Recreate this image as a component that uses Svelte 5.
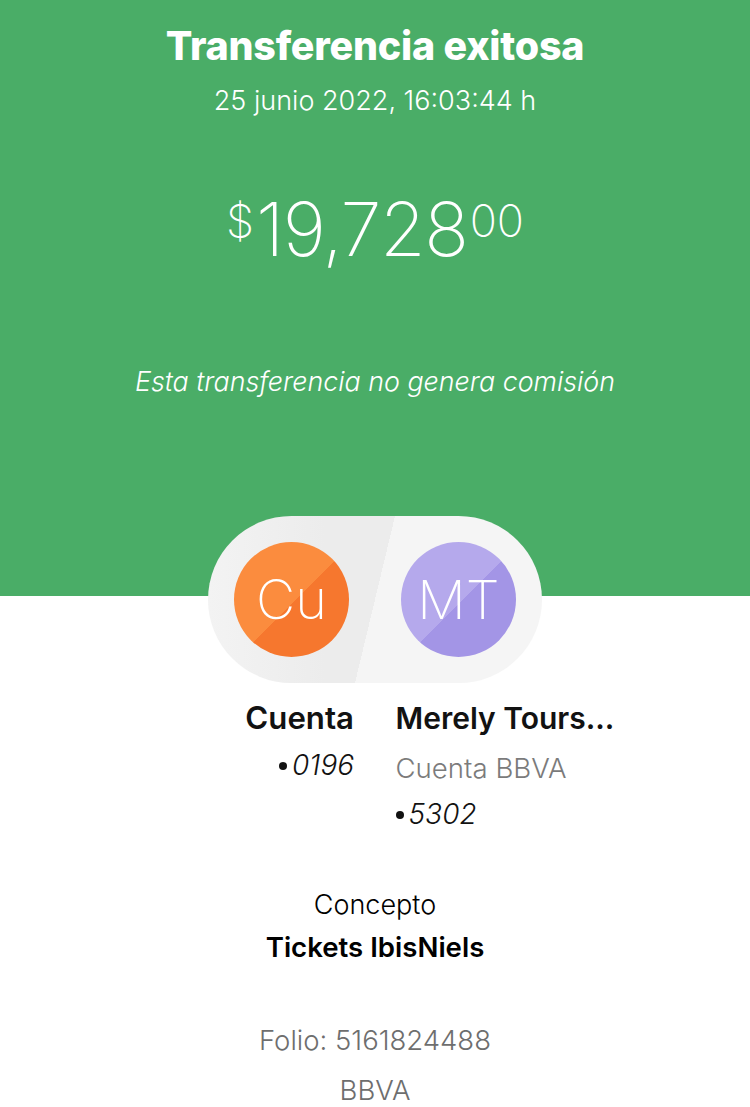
<script>
  const parties = [
    { initials: 'Cu', tone: 'orange' },
    { initials: 'MT', tone: 'purple' }
  ];
</script>

<main class="page">
  <header class="hero">
    <h1>Transferencia exitosa</h1>
    <p class="date">25 junio 2022, 16:03:44 h</p>
    <p class="amount"><span class="sup cur">$</span>19,728<span class="sup cents">00</span></p>
    <p class="note">Esta transferencia no genera comisión</p>
  </header>

  <div class="pill">
    {#each parties as p}
      <div class="avatar {p.tone}">{p.initials}</div>
    {/each}
  </div>

  <section class="accounts">
    <div class="col from">
      <div class="name">Cuenta</div>
      <div class="num first"><span class="dot"></span>0196</div>
    </div>
    <div class="col to">
      <div class="name">Merely Tours...</div>
      <div class="bank">Cuenta BBVA</div>
      <div class="num"><span class="dot"></span>5302</div>
    </div>
  </section>

  <section class="concept">
    <div class="label">Concepto</div>
    <div class="value">Tickets IbisNiels</div>
  </section>

  <footer class="foot">
    <div>Folio: 5161824488</div>
    <div class="brand">BBVA</div>
  </footer>
</main>

<style>
  :global(body) {
    margin: 0;
    background: #fff;
  }
  .page {
    width: 750px;
    height: 1107px;
    overflow: hidden;
    font-family: "Inter", "Liberation Sans", sans-serif;
    color: #121212;
    text-align: center;
  }
  .hero {
    height: 596px;
    box-sizing: border-box;
    padding-top: 22px;
    background: #4aad67;
    color: #fff;
  }
  h1 {
    margin: 0;
    font-size: 39.4px;
    line-height: 48px;
    font-weight: 800;
    letter-spacing: -0.2px;
  }
  .date {
    margin: 9px 0 0;
    font-size: 27px;
    line-height: 44px;
    font-weight: 300;
    letter-spacing: 0;
  }
  .amount {
    margin: 62px 0 0;
    font-size: 74px;
    line-height: 88px;
    font-weight: 200;
    letter-spacing: -1.4px;
  }
  .sup {
    display: inline-block;
    vertical-align: top;
    font-size: 45px;
    line-height: 71px;
    font-weight: 200;
    letter-spacing: 0;
  }
  .cents {
    margin-left: 2px;
  }
  .cur {
    margin-right: 2px;
  }
  .note {
    margin: 88px 0 0;
    font-size: 26.8px;
    line-height: 40px;
    font-weight: 300;
    font-style: italic;
  }
  .pill {
    width: 334px;
    height: 167px;
    margin: -80px auto 0;
    box-sizing: border-box;
    padding: 26px 26px 0;
    display: flex;
    justify-content: space-between;
    border-radius: 84px;
    background:
      linear-gradient(103.5deg, transparent 50%, #f5f5f5 50%),
      linear-gradient(90deg, #f3f3f3, #ececec 35%);
  }
  .avatar {
    width: 115px;
    height: 115px;
    border-radius: 50%;
    color: #fff;
    font-size: 54px;
    font-weight: 200;
    line-height: 115px;
  }
  .orange {
    background: linear-gradient(135deg, #fb8c3e 52%, #f6772e 52%);
  }
  .purple {
    background: linear-gradient(135deg, #b5a9ec 52%, #a395e6 52%);
  }
  .accounts {
    display: flex;
    gap: 41.5px;
    margin-top: 15px;
  }
  .col {
    width: 354px;
    flex: none;
  }
  .from {
    text-align: right;
  }
  .to {
    text-align: left;
  }
  .name {
    font-size: 30px;
    line-height: 40px;
    font-weight: 600;
  }
  .from .name {
    font-size: 31.2px;
  }
  .bank {
    margin-top: 10px;
    font-size: 27.6px;
    line-height: 40px;
    font-weight: 300;
    color: #7b7b7b;
  }
  .num {
    margin-top: 6px;
    font-size: 28px;
    line-height: 40px;
    font-weight: 300;
    font-style: italic;
  }
  .first {
    margin-top: 7px;
  }
  .dot {
    display: inline-block;
    width: 8px;
    height: 8px;
    margin: 0 5px 2px 0;
    border-radius: 50%;
    background: #121212;
    vertical-align: middle;
  }
  .concept {
    margin-top: 51px;
    color: #000;
  }
  .label {
    font-size: 27px;
    line-height: 40px;
    font-weight: 300;
  }
  .value {
    margin-top: 2px;
    font-size: 27.6px;
    line-height: 40px;
    font-weight: 600;
  }
  .foot {
    margin-top: 53px;
    font-size: 27.5px;
    line-height: 40px;
    font-weight: 300;
    color: #6e6e6e;
  }
  .brand {
    margin-top: 10px;
  }
</style>
